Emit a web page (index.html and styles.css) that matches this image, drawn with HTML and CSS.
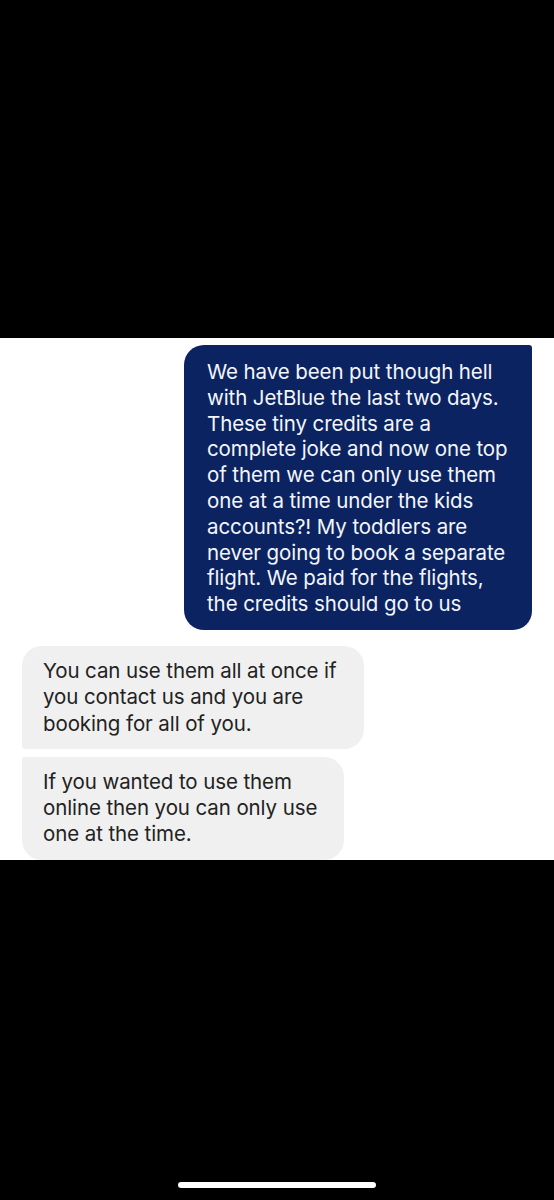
FILE: index.html
```html
<!DOCTYPE html>
<html lang="en">
<head>
  <meta charset="UTF-8" />
  <meta name="viewport" content="width=device-width, initial-scale=1.0"/>
  <title>Messages</title>
  <link rel="stylesheet" href="styles.css">
</head>
<body>
  <!-- top black area of the screenshot -->
  <div class="top-band"></div>

  <!-- the chat part -->
  <div class="chat">
    <div class="bubble sent">
      We have been put though hell with JetBlue the last two days. These tiny credits are a complete joke and now one top of them we can only use them one at a time under the kids accounts?! My toddlers are never going to book a separate flight. We paid for the flights, the credits should go to us
    </div>

    <div class="received-group">
      <div class="bubble received first">
        You can use them all at once if you contact us and you are booking for all of you.
      </div>
      <div class="bubble received last">
        If you wanted to use them online then you can only use one at the time.
      </div>
    </div>
  </div>

  <div class="bottom-band">
    <div class="home-indicator"></div>
  </div>
</body>
</html>
```

FILE: styles.css
```css
body {
  margin: 0;
  padding: 0;
  background: #000;
  font-family: Inter, "Noto Sans", Arial, sans-serif;
  -webkit-font-smoothing: antialiased;
}
.top-band {
  height: 338px;
  background: #000;
}
.chat {
  background: #fff;
  height: 522px;
  padding-top: 7px;
  box-sizing: border-box;
  display: flex;
  flex-direction: column;
}
.bubble {
  font-size: 20.5px;
  line-height: 25.8px;
  letter-spacing: -0.1px;
  box-sizing: border-box;
}
.sent {
  align-self: flex-end;
  margin-right: 22px;
  width: 348px;
  background: #0b2461;
  color: #f4f6fa;
  padding: 14px 24px 13px 23px;
  border-radius: 20px 3px 19px 20px;
}
.received-group {
  margin-top: 16px;
  margin-left: 22px;
  display: flex;
  flex-direction: column;
  align-items: flex-start;
  gap: 8px;
}
.received {
  background: #f0f0f0;
  color: #222;
  line-height: 26.3px;
  padding: 12px 25px 12px 21px;
}
.received.first {
  width: 342px;
  border-radius: 20px 20px 20px 3px;
}
.received.last {
  width: 322px;
  border-radius: 3px 20px 20px 20px;
}
.bottom-band {
  height: 340px;
  background: #000;
  padding-top: 322px;
  box-sizing: border-box;
}
.home-indicator {
  width: 198px;
  height: 6px;
  margin: 0 auto;
  background: #fff;
  border-radius: 3px;
}
```
